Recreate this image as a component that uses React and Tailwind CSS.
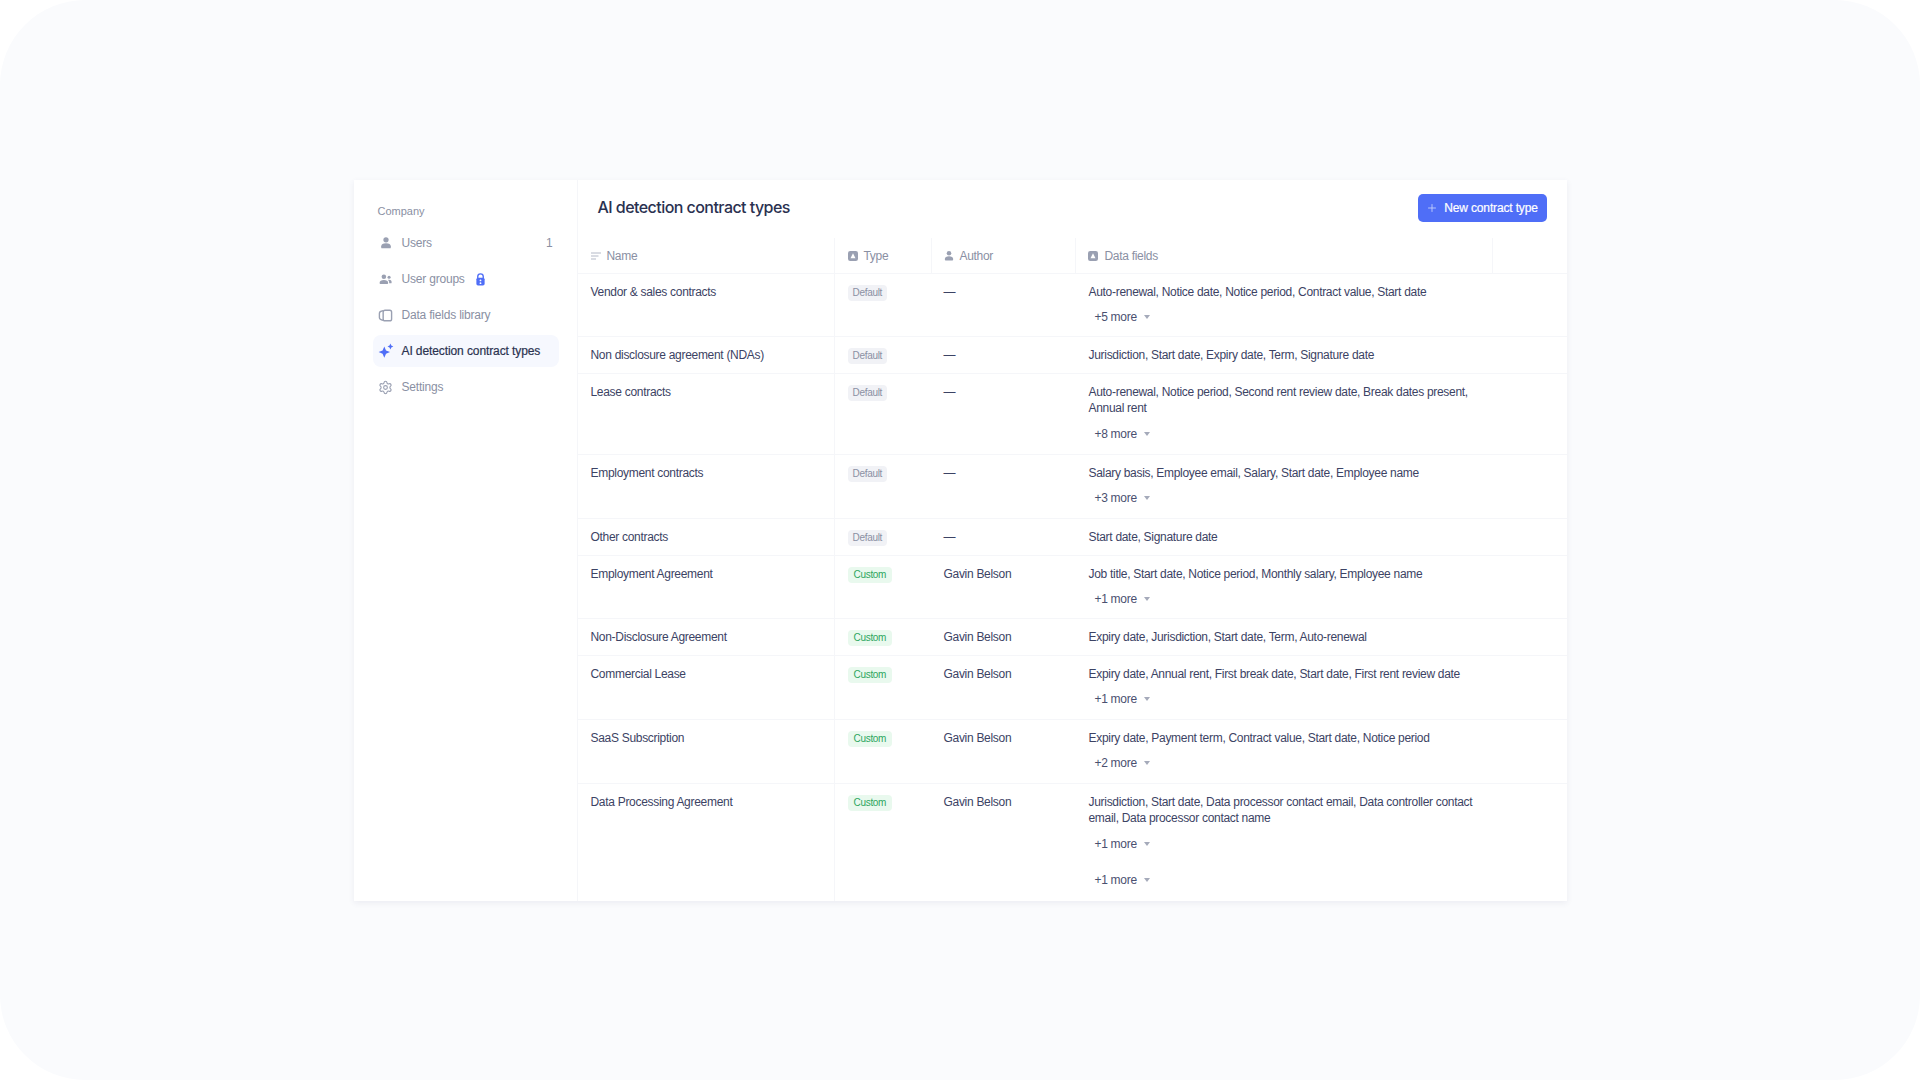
import React from "react";
import { Plus, Settings } from "lucide-react";

const rows = [
  { name: "Vendor & sales contracts", type: "Default", author: "—", fields: "Auto-renewal, Notice date, Notice period, Contract value, Start date", more: ["+5 more"], cls: "h-[63px]" },
  { name: "Non disclosure agreement (NDAs)", type: "Default", author: "—", fields: "Jurisdiction, Start date, Expiry date, Term, Signature date", more: [], cls: "h-[37px]" },
  { name: "Lease contracts", type: "Default", author: "—", fields: "Auto-renewal, Notice period, Second rent review date, Break dates present, Annual rent", more: ["+8 more"], cls: "h-[81px]", tall: true },
  { name: "Employment contracts", type: "Default", author: "—", fields: "Salary basis, Employee email, Salary, Start date, Employee name", more: ["+3 more"], cls: "h-[64px]" },
  { name: "Other contracts", type: "Default", author: "—", fields: "Start date, Signature date", more: [], cls: "h-[37px]" },
  { name: "Employment Agreement", type: "Custom", author: "Gavin Belson", fields: "Job title, Start date, Notice period, Monthly salary, Employee name", more: ["+1 more"], cls: "h-[63px]" },
  { name: "Non-Disclosure Agreement", type: "Custom", author: "Gavin Belson", fields: "Expiry date, Jurisdiction, Start date, Term, Auto-renewal", more: [], cls: "h-[37px]" },
  { name: "Commercial Lease", type: "Custom", author: "Gavin Belson", fields: "Expiry date, Annual rent, First break date, Start date, First rent review date", more: ["+1 more"], cls: "h-[64px]" },
  { name: "SaaS Subscription", type: "Custom", author: "Gavin Belson", fields: "Expiry date, Payment term, Contract value, Start date, Notice period", more: ["+2 more"], cls: "h-[64px]" },
  { name: "Data Processing Agreement", type: "Custom", author: "Gavin Belson", fields: "Jurisdiction, Start date, Data processor contact email, Data controller contact email, Data processor contact name", more: ["+1 more", "+1 more"], cls: "h-[117px] border-b-0", tall: true },
];

const UserIcon = ({ className }) => (
  <svg viewBox="0 0 16 16" className={className} fill="currentColor">
    <circle cx="8" cy="4.300" r="3" />
    <path d="M2.500 11.800c0-2 2.200-3.400 5.500-3.400s5.500 1.400 5.500 3.400v1.200c0 .7-.4 1.100-1.100 1.100H3.600c-.7 0-1.100-.4-1.100-1.100z" />
  </svg>
);

const GroupIcon = ({ className }) => (
  <svg viewBox="0 0 16 16" className={className} fill="currentColor">
    <circle cx="6" cy="4.600" r="2.800" />
    <path d="M.8 11.600c0-1.900 2-3 5.200-3s5.200 1.100 5.200 3v1.100c0 .5-.3.8-.8.8H1.600c-.5 0-.8-.3-.8-.8z" />
    <circle cx="12.400" cy="5.200" r="1.900" />
    <path d="M12.300 8.400c2 0 3.200 1 3.200 2.500v1c0 .4-.3.7-.7.7h-2.300v-1.200c0-1.200-.5-2.200-1.500-2.800.4-.1.800-.2 1.300-.2z" />
  </svg>
);

const LibraryIcon = ({ className }) => (
  <svg viewBox="0 0 16 16" className={className} fill="none" stroke="currentColor" strokeWidth="1.500">
    <rect x="5.500" y="2.400" width="9" height="11.200" rx="2" />
    <path d="M5.500 2.900C3 3.200 1.500 4.200 1.500 5.800v4.400c0 1.600 1.500 2.600 4 2.900" />
  </svg>
);

const SparkIcon = ({ className }) => (
  <svg viewBox="0 0 16 16" className={className} fill="currentColor">
    <path d="M6.300 3.400l1.700 4 4 1.700-4 1.700-1.700 4-1.700-4-4-1.700 4-1.700z" />
    <path d="M12.400.6l.9 2 2 .9-2 .9-.9 2-.9-2-2-.9 2-.9z" />
  </svg>
);

const LockIcon = ({ className }) => (
  <svg viewBox="0 0 12 14" className={className}>
    <path d="M3 6V3.800a3 3 0 0 1 6 0V6" fill="none" stroke="#4f6ef7" strokeWidth="1.500" />
    <rect x="1.500" y="5" width="9" height="8.500" rx="1.800" fill="#4f6ef7" />
    <circle cx="6" cy="8" r="1" fill="#fff" />
    <circle cx="6" cy="11" r="1" fill="#fff" />
  </svg>
);

const LinesIcon = ({ className }) => (
  <svg viewBox="0 0 12 12" className={className} fill="none" stroke="currentColor" strokeWidth="1">
    <path d="M1 3h10M1 6h7.500M1 9h5" />
  </svg>
);

const TypeIcon = ({ className }) => (
  <svg viewBox="0 0 12 12" className={className}>
    <rect x="1" y="1" width="10" height="10" rx="2.200" fill="currentColor" />
    <path d="M6 3.300l2.500 5h-5z" fill="#fff" />
  </svg>
);

const Caret = () => (
  <svg viewBox="0 0 8 6" className="h-[6px] w-[8px] text-[#a5aaba]" fill="currentColor">
    <path d="M1 1h6L4 5z" />
  </svg>
);

function NavItem({ icon, label, active, children }) {
  return (
    <div className={`flex h-8 items-center rounded-lg pl-[5px] pr-[6px] text-xs ${active ? "bg-[#f6f8fe] tracking-[-0.1px] text-[#2b3350] [-webkit-text-stroke:0.2px_#2b3350]" : "tracking-[-0.2px] text-[#8a90a3]"}`}>
      <span className="mr-[8px] flex w-4 items-center justify-center">{icon}</span>
      {label}
      {children}
    </div>
  );
}

function HeadCell({ icon, label, className }) {
  return (
    <div className={`flex h-[35px] items-center border-r border-[#f5f6f9] ${className}`}>
      {icon}
      <span>{label}</span>
    </div>
  );
}

function Badge({ type }) {
  const tone = type === "Custom" ? "bg-[#e9f9ee] text-[#2da65f] px-[6px]" : "bg-[#f1f2f6] text-[#8a90a3] px-[5px]";
  return (
    <span className={`inline-flex h-4 items-center rounded-[4px] text-[10px] leading-none ${tone}`}>
      {type}
    </span>
  );
}

function More({ label, className }) {
  return (
    <div className={`flex h-5 items-center gap-[6px] pl-[6px] text-[#4a5070] ${className}`}>
      <span>{label}</span>
      <Caret />
    </div>
  );
}

export default function App() {
  return (
    <div className="bg-white" style={{ fontFamily: '"Liberation Sans", Arial, sans-serif' }}>
      <div className="flex h-[1080px] items-start justify-center rounded-[85px] bg-[#fafbfd] pt-[180px]">
        <div className="flex h-[721px] w-[1213px] bg-white shadow-[0_2px_6px_rgba(60,70,110,0.08)]">
          {/* sidebar */}
          <aside className="w-[224px] shrink-0 border-r border-[#f5f6f9] pl-[19px] pr-[18px] pt-[23px]">
            <p className="mb-[8px] pl-[5px] text-[11px] leading-4 text-[#8a90a3]">Company</p>
            <div className="flex flex-col gap-1">
              <NavItem icon={<UserIcon className="h-[14px] w-[14px] text-[#9aa0b2]" />} label="Users">
                <span className="ml-auto text-[#8a90a3]">1</span>
              </NavItem>
              <NavItem icon={<GroupIcon className="h-[13px] w-[13px] text-[#9aa0b2]" />} label="User groups">
                <LockIcon className="ml-[10px] h-[13px] w-[11px]" />
              </NavItem>
              <NavItem icon={<LibraryIcon className="h-[15px] w-[15px] text-[#9aa0b2]" />} label="Data fields library" />
              <NavItem active icon={<SparkIcon className="h-4 w-4 text-[#4f6ef7]" />} label="AI detection contract types" />
              <NavItem icon={<Settings size={15} strokeWidth={1.75} className="text-[#9aa0b2]" />} label="Settings" />
            </div>
          </aside>

          {/* main */}
          <main className="flex-1">
            <div className="flex h-[58px] items-start justify-between pl-[20px] pr-[20px] pt-[14px]">
              <h1 className="pt-[3px] font-['Inter'] text-base font-medium leading-5 tracking-[-0.55px] text-[#2a3150]">AI detection contract types</h1>
              <button className="flex h-7 w-[129px] items-center justify-center gap-[6px] rounded-[5px] bg-[#4f6ef7] text-xs tracking-[-0.15px] text-white [-webkit-text-stroke:0.2px_#fff]">
                <Plus size={12} strokeWidth={1.75} className="text-[#c5d0fc]" />
                New contract type
              </button>
            </div>

            <div className="text-xs leading-4 tracking-[-0.3px] text-[#3c4364]">
              <div className="grid grid-cols-[257px_97px_144px_417px_1fr] border-b border-[#f5f6f9] text-[#8a90a3]">
                <HeadCell label="Name" className="gap-[5px] pl-[12px]" icon={<LinesIcon className="h-3 w-3 text-[#b4b9c7]" />} />
                <HeadCell label="Type" className="gap-[5px] pl-[12px]" icon={<TypeIcon className="h-3 w-3 text-[#9aa0b2]" />} />
                <HeadCell label="Author" className="gap-[5px] pl-[11px]" icon={<UserIcon className="h-3 w-3 text-[#9aa0b2]" />} />
                <HeadCell label="Data fields" className="gap-[6px] pl-[11px]" icon={<TypeIcon className="h-3 w-3 text-[#9aa0b2]" />} />
                <div />
              </div>

              {rows.map((r) => (
                <div key={r.name + r.type} className={`grid grid-cols-[257px_97px_144px_417px_1fr] border-b border-[#f5f6f9] ${r.cls}`}>
                  <div className="border-r border-[#f5f6f9] pl-[13px] pt-[10px]">{r.name}</div>
                  <div className="pl-[13px] pt-[10px]">
                    <Badge type={r.type} />
                  </div>
                  <div className="pl-[12px] pt-[10px]">{r.author}</div>
                  <div className="pl-[13px] pt-[10px]">
                    <div>{r.fields}</div>
                    {r.more.map((m, i) => (
                      <More key={i} label={m} className={i > 0 ? "mt-[16px]" : r.tall ? "mt-[8px]" : "mt-[7px]"} />
                    ))}
                  </div>
                  <div />
                </div>
              ))}
            </div>
          </main>
        </div>
      </div>
    </div>
  );
}
